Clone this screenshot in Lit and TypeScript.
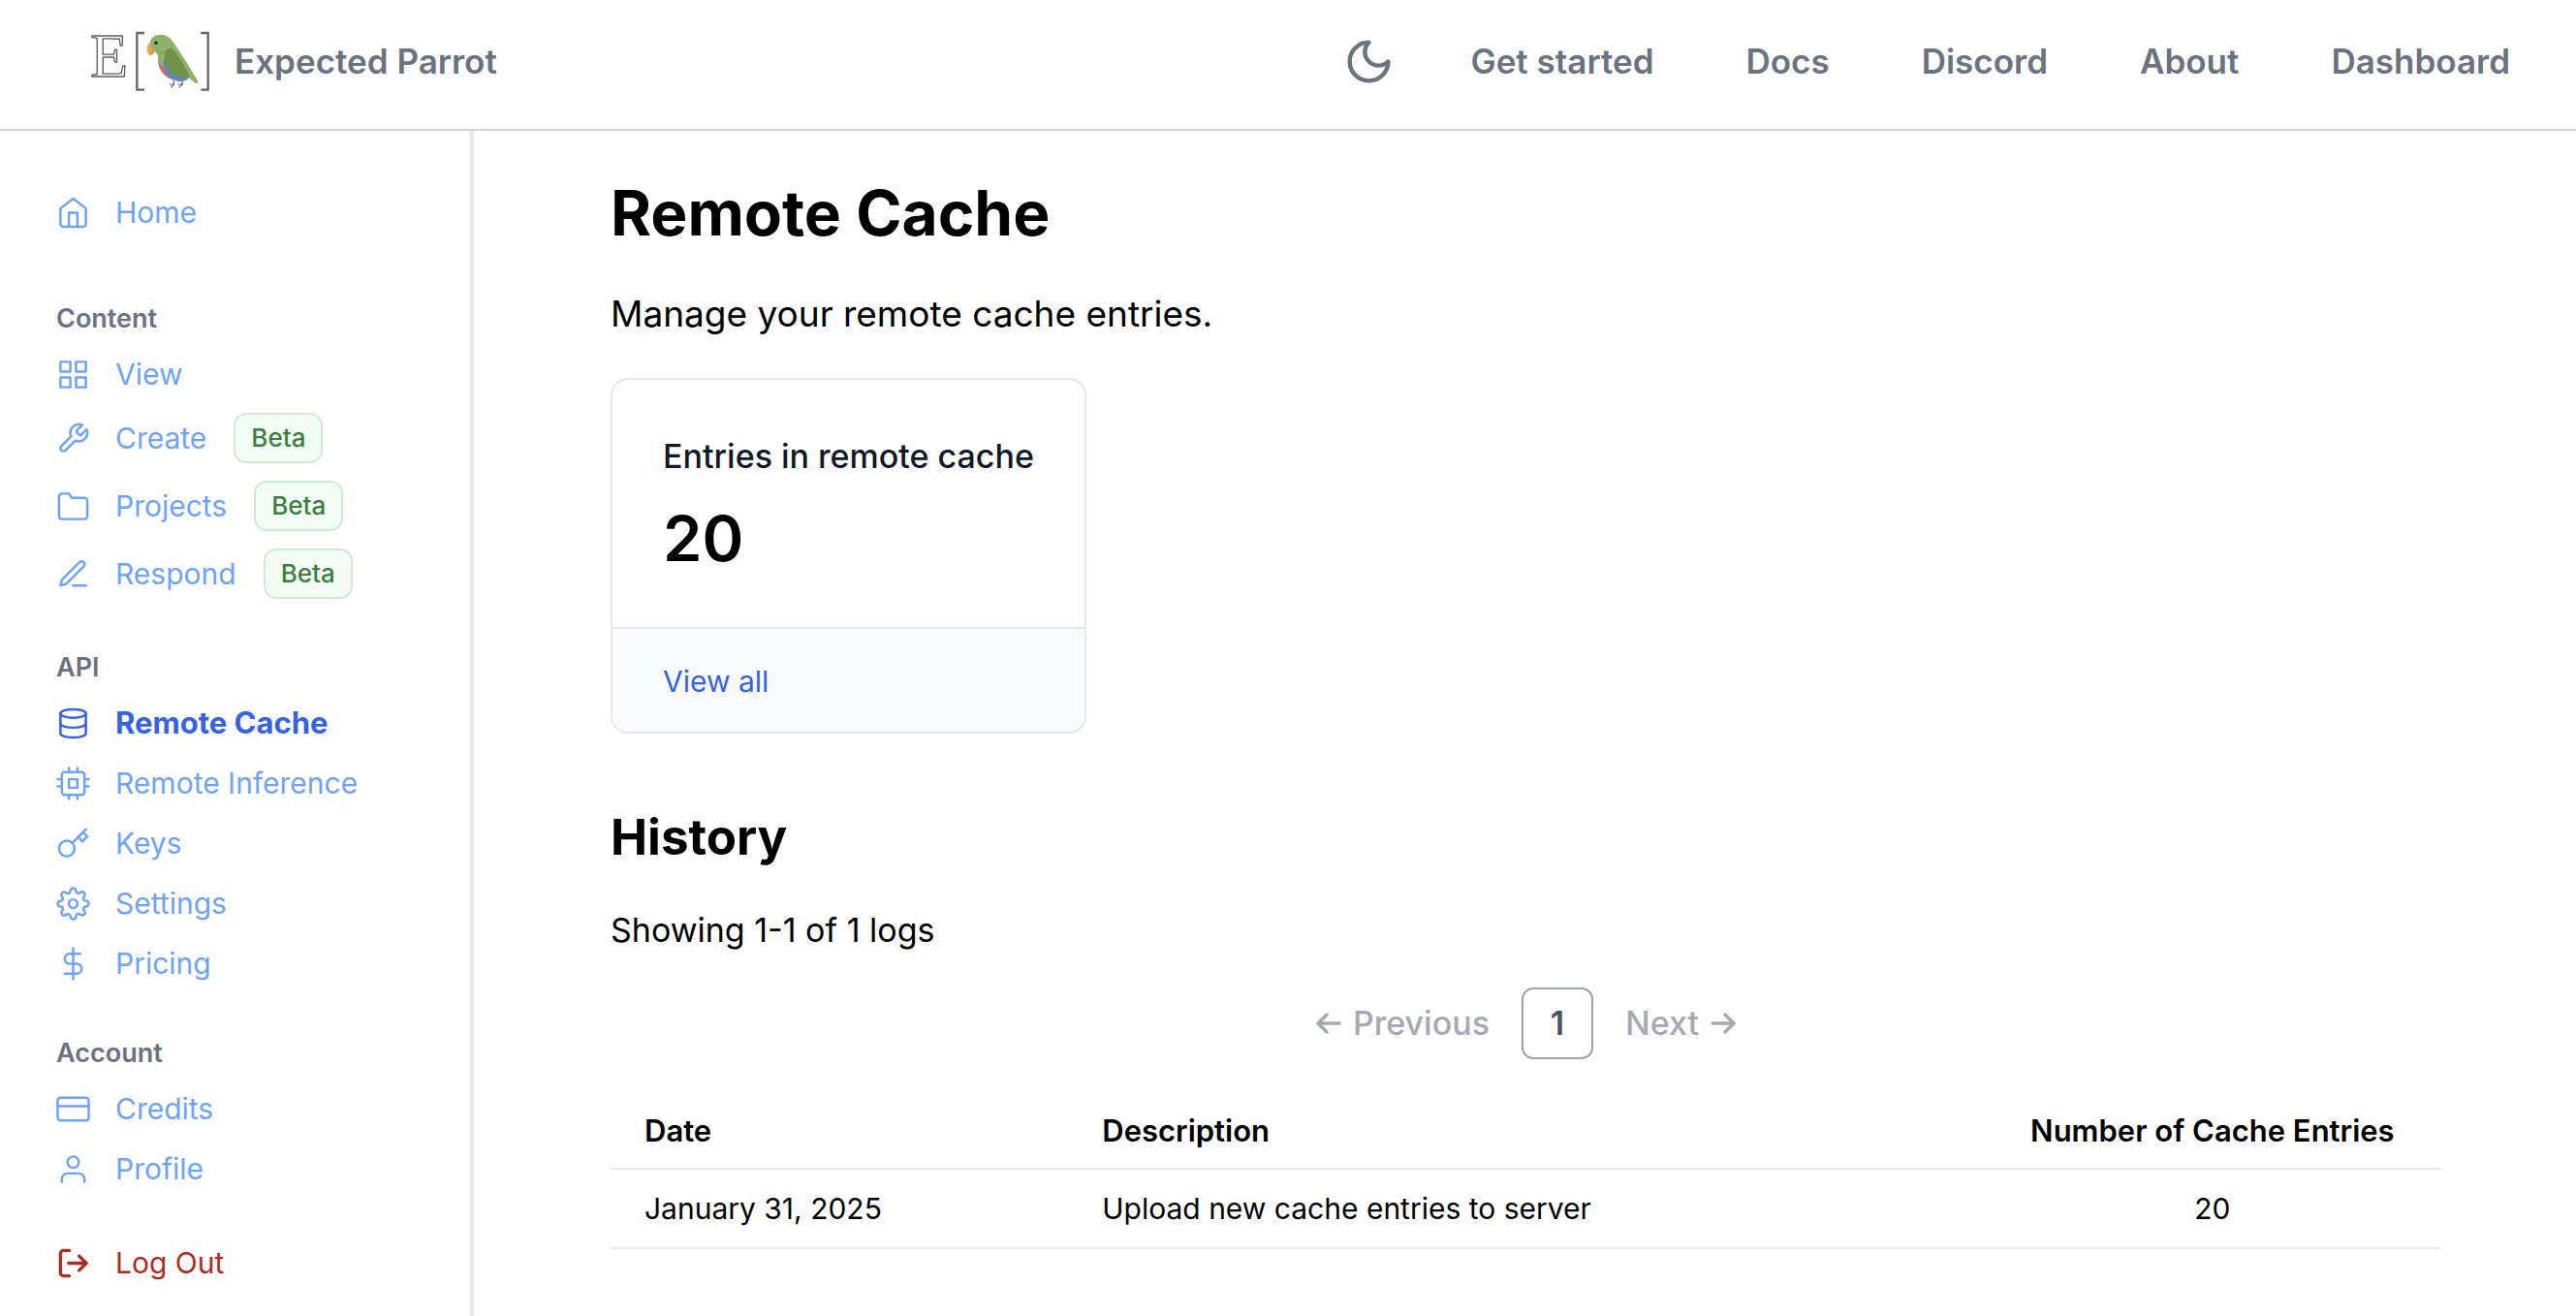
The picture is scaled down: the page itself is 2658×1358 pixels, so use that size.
import { LitElement, html, svg, css, nothing, type SVGTemplateResult } from "lit";
import { customElement, property } from "lit/decorators.js";
import { classMap } from "lit/directives/class-map.js";

const icons: Record<string, SVGTemplateResult> = {
  home: svg`<path d="m3 9 9-7 9 7v11a2 2 0 0 1-2 2H5a2 2 0 0 1-2-2z"/><path d="M9 22V12h6v10"/>`,
  grid: svg`<rect x="3" y="3" width="7" height="7"/><rect x="14" y="3" width="7" height="7"/><rect x="14" y="14" width="7" height="7"/><rect x="3" y="14" width="7" height="7"/>`,
  wrench: svg`<path d="M14.7 6.3a1 1 0 0 0 0 1.4l1.6 1.6a1 1 0 0 0 1.4 0l3.77-3.77a6 6 0 0 1-7.94 7.94l-6.91 6.91a2.12 2.12 0 0 1-3-3l6.91-6.91a6 6 0 0 1 7.94-7.94l-3.76 3.76z"/>`,
  folder: svg`<path d="M22 19a2 2 0 0 1-2 2H4a2 2 0 0 1-2-2V5a2 2 0 0 1 2-2h5l2 3h9a2 2 0 0 1 2 2z"/>`,
  pen: svg`<path d="M12 20h9"/><path d="M16.5 3.5a2.121 2.121 0 0 1 3 3L7 19l-4 1 1-4L16.5 3.5z"/>`,
  database: svg`<ellipse cx="12" cy="5" rx="9" ry="3"/><path d="M21 12c0 1.66-4 3-9 3s-9-1.34-9-3"/><path d="M3 5v14c0 1.66 4 3 9 3s9-1.34 9-3V5"/>`,
  cpu: svg`<rect x="4" y="4" width="16" height="16" rx="2"/><rect x="9" y="9" width="6" height="6"/><path d="M9 1v3M15 1v3M9 20v3M15 20v3M20 9h3M20 14h3M1 9h3M1 14h3"/>`,
  key: svg`<circle cx="7.5" cy="15.5" r="5.5"/><path d="m21 2-9.6 9.6"/><path d="m15.5 7.5 3 3L22 7l-3-3"/>`,
  settings: svg`<circle cx="12" cy="12" r="3"/><path d="M19.4 15a1.65 1.65 0 0 0 .33 1.82l.06.06a2 2 0 1 1-2.83 2.83l-.06-.06a1.65 1.65 0 0 0-1.82-.33 1.65 1.65 0 0 0-1 1.51V21a2 2 0 0 1-4 0v-.09A1.65 1.65 0 0 0 9 19.4a1.65 1.65 0 0 0-1.82.33l-.06.06a2 2 0 1 1-2.83-2.83l.06-.06a1.65 1.65 0 0 0 .33-1.82 1.65 1.65 0 0 0-1.51-1H3a2 2 0 0 1 0-4h.09A1.65 1.65 0 0 0 4.6 9a1.65 1.65 0 0 0-.33-1.82l-.06-.06a2 2 0 1 1 2.83-2.83l.06.06a1.65 1.65 0 0 0 1.82.33H9a1.65 1.65 0 0 0 1-1.51V3a2 2 0 0 1 4 0v.09a1.65 1.65 0 0 0 1 1.51 1.65 1.65 0 0 0 1.82-.33l.06-.06a2 2 0 1 1 2.83 2.83l-.06.06a1.65 1.65 0 0 0-.33 1.82V9a1.65 1.65 0 0 0 1.51 1H21a2 2 0 0 1 0 4h-.09a1.65 1.65 0 0 0-1.51 1z"/>`,
  dollar: svg`<path d="M12 1v22"/><path d="M17 5H9.5a3.5 3.5 0 0 0 0 7h5a3.5 3.5 0 0 1 0 7H6"/>`,
  card: svg`<rect x="1" y="4" width="22" height="16" rx="2"/><path d="M1 10h22"/>`,
  user: svg`<path d="M20 21v-2a4 4 0 0 0-4-4H8a4 4 0 0 0-4 4v2"/><circle cx="12" cy="7" r="4"/>`,
  logout: svg`<g stroke-width="2.3"><path d="M9.3 3H5.2A2.2 2.2 0 0 0 3 5.2v13.6A2.2 2.2 0 0 0 5.2 21h4.1"/><path d="M8.8 12h12.4"/><path d="m16.2 6.9 5.1 5.1-5.1 5.1"/></g>`,
};

interface NavItem {
  label: string;
  icon: string;
  beta?: boolean;
  active?: boolean;
}

const sections: { title: string; items: NavItem[] }[] = [
  {
    title: "Content",
    items: [
      { label: "View", icon: "grid" },
      { label: "Create", icon: "wrench", beta: true },
      { label: "Projects", icon: "folder", beta: true },
      { label: "Respond", icon: "pen", beta: true },
    ],
  },
  {
    title: "API",
    items: [
      { label: "Remote Cache", icon: "database", active: true },
      { label: "Remote Inference", icon: "cpu" },
      { label: "Keys", icon: "key" },
      { label: "Settings", icon: "settings" },
      { label: "Pricing", icon: "dollar" },
    ],
  },
  {
    title: "Account",
    items: [
      { label: "Credits", icon: "card" },
      { label: "Profile", icon: "user" },
    ],
  },
];

const logs = [{ date: "January 31, 2025", description: "Upload new cache entries to server", entries: 20 }];

const base = css`
  * {
    box-sizing: border-box;
  }
  a {
    color: inherit;
    text-decoration: none;
  }
  button {
    font: inherit;
    color: inherit;
    background: none;
    border: 0;
    padding: 0;
    margin: 0;
    cursor: pointer;
  }
  svg {
    display: block;
    flex: none;
  }
`;

@customElement("site-header")
class SiteHeader extends LitElement {
  static styles = [
    base,
    css`
      :host {
        display: block;
      }
      .bar {
        display: flex;
        align-items: center;
        justify-content: space-between;
        padding: 19px 68px 26px 92px;
        border-bottom: 2px solid #d1d5db;
        color: #6b7280;
        font-size: 35px;
        font-weight: 600;
        line-height: 64px;
      }
      .brand {
        display: flex;
        align-items: center;
        gap: 25px;
      }
      .mark {
        overflow: visible;
      }
      .letter {
        font-family: "Liberation Serif", serif;
        font-size: 192px;
        font-weight: 400;
        line-height: 1;
      }
      .links {
        display: flex;
        align-items: center;
        gap: 95px;
      }
      .right {
        display: flex;
        align-items: center;
        gap: 78px;
      }
    `,
  ];

  render() {
    return html`
      <header class="bar">
        <a class="brand" href="#">
          <svg class="mark" width="125" height="88" viewBox="96 57 375 264" fill="none" aria-hidden="true">
            <text class="letter" x="99" y="236" fill="#fff" stroke="#5e5e5e" stroke-width="4" stroke-linejoin="round">E</text>
            <path d="M267 102H244V278H267M442 102H464V278H442" stroke="#666" stroke-width="7" />
            <path d="M290 130C278 132 273 145 275 158Q278 170 286 172Q298 164 299 150Z" fill="#e9ad5b" />
            <path d="M287 152Q298 156 299 160Q295 168 286 172Z" fill="#dd9547" />
            <path d="M309 175C306 215 328 242 362 249L350 190Z" fill="#d06a76" />
            <path d="M327 182C323 222 345 252 382 252Q400 250 408 238L360 180Z" fill="#5b87c3" />
            <path d="M285 135C284 118 298 107 316 107C334 107 346 115 356 130Q394 186 431 248Q434 261 425 257L404 240L345 170L328 184Q324 196 326 208Q310 200 309 178Q309 166 300 160Q286 152 285 135Z" fill="#8fb26b" />
            <path d="M304 161Q318 168 333 160" stroke="#6f934c" stroke-width="3" />
            <path d="M330 166C333 150 346 146 358 154Q384 190 408 236Q398 243 378 240C344 232 327 202 330 166Z" fill="#70924b" />
            <circle cx="303" cy="133" r="5.5" fill="#212b36" />
            <path d="M358 249V260M344 261H361M359 261L349 271M384 249V260M370 261H388M385 261L374 271" stroke="#67696a" stroke-width="3.6" />
          </svg>
          <span>Expected Parrot</span>
        </a>
        <div class="right">
          <button type="button" aria-label="Toggle dark mode">
            <svg width="53" height="53" viewBox="0 0 24 24" fill="none" stroke="currentColor" stroke-width="2" stroke-linecap="round" stroke-linejoin="round">
              <path d="M12 3a6 6 0 0 0 9 9 9 9 0 1 1-9-9Z" />
            </svg>
          </button>
          <nav class="links">
            ${["Get started", "Docs", "Discord", "About", "Dashboard"].map((t) => html`<a href="#">${t}</a>`)}
          </nav>
        </div>
      </header>
    `;
  }
}

@customElement("side-item")
class SideItem extends LitElement {
  @property({ attribute: false }) item!: NavItem;

  static styles = [
    base,
    css`
      :host {
        display: block;
      }
      .row {
        display: flex;
        align-items: center;
        gap: 26px;
        color: #70a3f5;
        font-size: 30px;
        line-height: 44px;
      }
      .active {
        color: #3762e3;
        font-size: 31px;
        font-weight: 700;
      }
      .danger {
        color: #aa2d25;
      }
      .badge {
        margin-left: 2px;
        padding: 0 16px;
        border: 2px solid #d0ead5;
        border-radius: 13px;
        background: #f2fcf5;
        color: #3c7d41;
        font-size: 26px;
        font-weight: 500;
        line-height: 48px;
      }
    `,
  ];

  render() {
    const { label, icon, beta, active } = this.item;
    const danger = icon === "logout";
    const body = html`
      <svg width="35" height="35" viewBox="0 0 24 24" fill="none" stroke="currentColor" stroke-width="1.7" stroke-linecap="round" stroke-linejoin="round" aria-hidden="true">
        ${icons[icon]}
      </svg>
      <span>${label}</span>
      ${beta ? html`<span class="badge">Beta</span>` : nothing}
    `;
    return danger
      ? html`<button type="button" class="row danger">${body}</button>`
      : html`<a href="#" class=${classMap({ row: true, active: !!active })}>${body}</a>`;
  }
}

@customElement("side-bar")
class SideBar extends LitElement {
  static styles = [
    base,
    css`
      :host {
        display: block;
        border-right: 4px solid #e5e7eb;
      }
      .side {
        display: flex;
        flex-direction: column;
        gap: 53px;
        padding: 62px 24px 36px 58px;
      }
      .group {
        display: flex;
        flex-direction: column;
        gap: 18px;
      }
      .home {
        padding-bottom: 17px;
      }
      .title {
        margin: 0;
        color: #6b7280;
        font-size: 27px;
        font-weight: 600;
        line-height: 35px;
      }
    `,
  ];

  render() {
    return html`
      <nav class="side">
        <side-item class="home" .item=${{ label: "Home", icon: "home" }}></side-item>
        ${sections.map(
          (s) => html`
            <div class="group">
              <h2 class="title">${s.title}</h2>
              ${s.items.map((i) => html`<side-item .item=${i}></side-item>`)}
            </div>
          `,
        )}
        <side-item .item=${{ label: "Log Out", icon: "logout" }}></side-item>
      </nav>
    `;
  }
}

@customElement("cache-page")
class CachePage extends LitElement {
  static styles = [
    base,
    css`
      :host {
        display: block;
        color: #000;
      }
      .page {
        padding: 49px 139px 48px 141px;
      }
      h1,
      h2,
      p {
        margin: 0;
      }
      h1 {
        font-size: 64px;
        font-weight: 700;
        line-height: 72px;
      }
      .lead {
        margin-top: 38px;
        font-size: 37px;
        line-height: 60px;
      }
      .card {
        width: fit-content;
        margin-top: 36px;
        border: 2px solid #e5e7eb;
        border-radius: 18px;
        overflow: hidden;
      }
      .stat {
        padding: 55px 52px 53px;
      }
      .label {
        color: #111827;
        font-size: 34px;
        font-weight: 500;
        line-height: 48px;
      }
      .value {
        margin-top: 23px;
        font-size: 65px;
        font-weight: 600;
        line-height: 76px;
      }
      .foot {
        padding: 32px 52px 30px;
        border-top: 2px solid #e5e7eb;
        background: #f9fafc;
        color: #3762e3;
        font-size: 30px;
        line-height: 44px;
      }
      h2 {
        margin-top: 77px;
        font-size: 51px;
        font-weight: 700;
        line-height: 60px;
      }
      .count {
        margin-top: 40px;
        font-size: 34px;
        line-height: 52px;
      }
      .pager {
        display: flex;
        align-items: center;
        justify-content: center;
        gap: 33px;
        margin-top: 33px;
        color: #a6a9b0;
        font-size: 34px;
        font-weight: 500;
        line-height: 70px;
      }
      .step {
        display: flex;
        align-items: center;
        gap: 12px;
      }
      .current {
        min-width: 74px;
        border: 2px solid #9ca3af;
        border-radius: 12px;
        color: #4b5563;
        font-weight: 600;
      }
      table {
        width: 100%;
        margin-top: 32px;
        border-collapse: separate;
        border-spacing: 0;
        table-layout: fixed;
        font-size: 30px;
        line-height: 44px;
      }
      th,
      td {
        padding: 18px 35px;
        border-bottom: 2px solid #e5e7eb;
        text-align: left;
      }
      th {
        padding: 20px 35px 16px;
        font-size: 31px;
        font-weight: 600;
      }
      .wide {
        width: 50%;
      }
      .number {
        text-align: center;
        white-space: nowrap;
      }
    `,
  ];

  render() {
    return html`
      <main class="page">
        <h1>Remote Cache</h1>
        <p class="lead">Manage your remote cache entries.</p>
        <section class="card">
          <div class="stat">
            <p class="label">Entries in remote cache</p>
            <p class="value">20</p>
          </div>
          <div class="foot"><a href="#">View all</a></div>
        </section>
        <h2>History</h2>
        <p class="count">Showing 1-1 of 1 logs</p>
        <nav class="pager" aria-label="Pages">
          <button type="button" class="step">
            <svg width="26" height="24" viewBox="0 0 26 24" fill="none" stroke="currentColor" stroke-width="3.4" stroke-linecap="round" stroke-linejoin="round" aria-hidden="true">
              <path d="M24 12H2M11 3 2 12l9 9" />
            </svg>
            Previous
          </button>
          <button type="button" class="current" aria-current="page">1</button>
          <button type="button" class="step">
            Next
            <svg width="26" height="24" viewBox="0 0 26 24" fill="none" stroke="currentColor" stroke-width="3.4" stroke-linecap="round" stroke-linejoin="round" aria-hidden="true">
              <path d="M2 12h22M15 3l9 9-9 9" />
            </svg>
          </button>
        </nav>
        <table>
          <thead>
            <tr>
              <th scope="col">Date</th>
              <th scope="col" class="wide">Description</th>
              <th scope="col" class="number">Number of Cache Entries</th>
            </tr>
          </thead>
          <tbody>
            ${logs.map(
              (l) => html`
                <tr>
                  <td>${l.date}</td>
                  <td>${l.description}</td>
                  <td class="number">${l.entries}</td>
                </tr>
              `,
            )}
          </tbody>
        </table>
      </main>
    `;
  }
}

@customElement("app-root")
class AppRoot extends LitElement {
  static styles = css`
    :host {
      display: flex;
      flex-direction: column;
      min-height: 100vh;
      background: #fff;
      font-family: Inter, "Liberation Sans", sans-serif;
    }
    .body {
      flex: 1;
      display: grid;
      grid-template-columns: 489px 1fr;
    }
  `;

  render() {
    return html`
      <site-header></site-header>
      <div class="body">
        <side-bar></side-bar>
        <cache-page></cache-page>
      </div>
    `;
  }
}
